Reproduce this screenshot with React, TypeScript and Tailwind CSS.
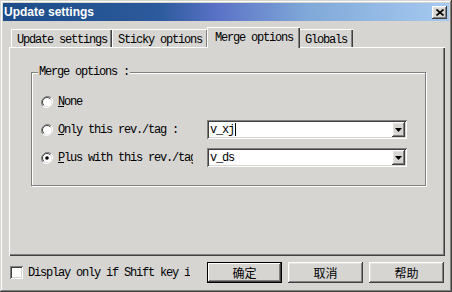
const mono = { fontFamily: '"Liberation Mono", "Courier New", monospace' };
const cjk = { fontFamily: '"Noto Sans CJK SC", "Liberation Sans", sans-serif' };

const raised =
  'shadow-[inset_-1px_-1px_0_#404040,inset_1px_1px_0_#ffffff,inset_-2px_-2px_0_#808080,inset_2px_2px_0_#e4e3e0]';
const sunken =
  'shadow-[inset_1px_1px_0_#808080,inset_-1px_-1px_0_#ffffff,inset_2px_2px_0_#404040,inset_-2px_-2px_0_#d6d5d2]';

function Radio({ checked }: { checked?: boolean }) {
  return (
    <svg width="12" height="12" viewBox="0 0 12 12" className="shrink-0">
      <path d="M10.2 1.8 A6 6 0 0 0 1.8 10.2" fill="none" stroke="#808080" strokeWidth="1" />
      <path d="M1.8 10.2 A6 6 0 0 0 10.2 1.8" fill="none" stroke="#ffffff" strokeWidth="1" />
      <circle cx="6" cy="6" r="4.5" fill="#ffffff" />
      <path d="M9.2 2.8 A4.5 4.5 0 0 0 2.8 9.2" fill="none" stroke="#404040" strokeWidth="1" />
      {checked && <circle cx="6" cy="6" r="1.8" fill="#000000" />}
    </svg>
  );
}

function Combo({ value, caret }: { value: string; caret?: boolean }) {
  return (
    <div className={`w-[200px] h-[19px] bg-white ${sunken} flex items-center p-[2px]`}>
      <div className="flex-1 flex items-center pl-[1px] text-[12px] tracking-[-1.2px] text-black" style={mono}>
        <span>{value}</span>
        {caret && <span className="w-px h-[13px] bg-black ml-[1px]" />}
      </div>
      <div className={`w-[13px] h-[15px] bg-[#d6d5d2] ${raised} flex items-center justify-center`}>
        <svg width="7" height="4" viewBox="0 0 7 4">
          <path d="M0 0 H7 L3.5 4 Z" fill="#000" />
        </svg>
      </div>
    </div>
  );
}

function Tab({ label, width, active }: { label: string; width: string; active?: boolean }) {
  if (active) {
    return (
      <div
        className={`${width} h-[21px] -ml-px -mr-px -mb-px relative z-10 bg-[#d6d5d2] border-l border-t border-white shadow-[inset_-1px_0_0_#404040,inset_-2px_0_0_#808080] pl-[7px] pt-[3px] text-[12px] tracking-[-1.2px] leading-[14px] text-black`}
        style={mono}
      >
        {label}
      </div>
    );
  }
  return (
    <div
      className={`${width} h-[18px] bg-[#d6d5d2] border-l border-t border-white shadow-[inset_-1px_0_0_#404040,inset_-2px_0_0_#808080] pl-[5px] pt-[3px] text-[12px] tracking-[-1.2px] leading-[14px] text-black`}
      style={mono}
    >
      {label}
    </div>
  );
}

function Button({ label, isDefault }: { label: string; isDefault?: boolean }) {
  return (
    <div
      className={`w-[75px] h-[21px] bg-[#d6d5d2] flex items-center justify-center text-[12px] text-black ${
        isDefault ? 'border border-black shadow-[inset_-1px_-1px_0_#404040,inset_1px_1px_0_#ffffff,inset_-2px_-2px_0_#808080]' : raised
      }`}
      style={cjk}
    >
      {label}
    </div>
  );
}

export default function App() {
  return (
    <div
      className="w-[452px] h-[292px] bg-[#d6d5d2] p-[3px] flex flex-col shadow-[inset_-1px_-1px_0_#404040,inset_1px_1px_0_#d6d5d2,inset_-2px_-2px_0_#808080,inset_2px_2px_0_#ffffff] overflow-hidden"
    >
      {/* Title bar */}
      <div className="h-[18px] flex items-center justify-between bg-[linear-gradient(90deg,#1c4c88_0%,#2c5a9c_35%,#5a72c6_48%,#80a8d8_68%,#a6caf0_100%)] pl-[1px] pr-[2px]">
        <span className="text-white font-bold text-[12px]" style={{ fontFamily: '"Liberation Sans", Arial, sans-serif' }}>
          Update settings
        </span>
        <div className={`w-[15px] h-[13px] bg-[#d6d5d2] ${raised} flex items-center justify-center`}>
          <svg width="8" height="7" viewBox="0 0 8 7">
            <path d="M0.5 0.5 L7.5 6.5 M7.5 0.5 L0.5 6.5" stroke="#000" strokeWidth="1.6" />
          </svg>
        </div>
      </div>

      {/* Tabs */}
      <div className="mt-[8px] ml-[8px] flex items-end h-[18px]">
        <Tab label="Update settings" width="w-[101px]" />
        <Tab label="Sticky options" width="w-[96px]" />
        <Tab label="Merge options" width="w-[93px]" active />
        <Tab label="Globals" width="w-[54px]" />
      </div>

      {/* Tab panel */}
      <div className="ml-[6px] w-[436px] h-[209px] border-t border-l border-white shadow-[inset_-1px_-1px_0_#404040,inset_-2px_-2px_0_#808080] pl-[21px] pt-[24px]">
        <div className="relative w-[395px] h-[114px] border border-[#808080] shadow-[inset_1px_1px_0_#ffffff,1px_1px_0_#ffffff]">
          <span
            className="absolute -top-[8px] left-[6px] px-px bg-[#d6d5d2] text-[12px] tracking-[-1.2px] leading-[14px] text-black"
            style={mono}
          >
            Merge options :
          </span>
          <div className="flex flex-col pt-[19px] gap-[9px] pl-[9px]">
            <div className="h-[19px] flex items-center gap-[5px]">
              <Radio />
              <span className="text-[12px] tracking-[-1.2px] text-black" style={mono}>
                <span className="underline">N</span>one
              </span>
            </div>
            <div className="h-[19px] flex items-center">
              <Radio />
              <span className="ml-[5px] w-[135px] overflow-hidden whitespace-nowrap text-[12px] tracking-[-1.2px] text-black" style={mono}>
                <span className="underline">O</span>nly this rev./tag :
              </span>
              <div className="ml-[14px]">
                <Combo value="v_xj" caret />
              </div>
            </div>
            <div className="h-[19px] flex items-center">
              <Radio checked />
              <span className="ml-[5px] w-[135px] overflow-hidden whitespace-nowrap text-[12px] tracking-[-1.2px] text-black" style={mono}>
                <span className="underline">P</span>lus with this rev./tag :
              </span>
              <div className="ml-[14px]">
                <Combo value="v_ds" />
              </div>
            </div>
          </div>
        </div>
      </div>

      {/* Bottom row */}
      <div className="mt-[6px] h-[21px] flex items-center">
        <div className={`ml-[7px] w-[13px] h-[13px] bg-white ${sunken}`} />
        <span className="ml-[5px] w-[162px] overflow-hidden whitespace-nowrap text-[12px] tracking-[-1.2px] text-black" style={mono}>
          Display only if Shift key is pressed
        </span>
        <div className="ml-[17px] flex gap-[6px]">
          <Button label="确定" isDefault />
          <Button label="取消" />
          <Button label="帮助" />
        </div>
      </div>
    </div>
  );
}
